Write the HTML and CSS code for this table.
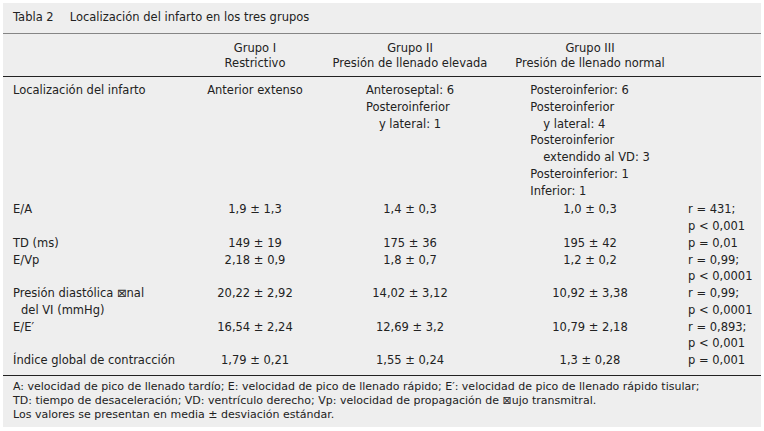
FILE: index.html
```html
<!DOCTYPE html>
<html lang="es">
<head>
    <meta charset="UTF-8">
    <title>Tabla 2</title>
    <link rel="stylesheet" href="styles.css">
</head>
<body>
    <div class="panel">
        <div class="caption">
            <span class="label">Tabla 2</span>
            <span>Localización del infarto en los tres grupos</span>
        </div>

        <table class="data">
            <colgroup>
                <col class="c1"><col class="c2"><col class="c3"><col class="c4"><col class="c5">
            </colgroup>
            <thead>
                <tr>
                    <th></th>
                    <th>Grupo I<br>Restrictivo</th>
                    <th>Grupo II<br>Presión de llenado elevada</th>
                    <th>Grupo III<br>Presión de llenado normal</th>
                    <th></th>
                </tr>
            </thead>
            <tbody>
                <tr class="first">
                    <td>Localización del infarto</td>
                    <td class="mid">Anterior extenso</td>
                    <td class="mid">
                        <div class="block">
                            <div>Anteroseptal: 6</div>
                            <div>Posteroinferior</div>
                            <div class="cont">y lateral: 1</div>
                        </div>
                    </td>
                    <td class="mid">
                        <div class="block">
                            <div>Posteroinferior: 6</div>
                            <div>Posteroinferior</div>
                            <div class="cont">y lateral: 4</div>
                            <div>Posteroinferior</div>
                            <div class="cont">extendido al VD: 3</div>
                            <div>Posteroinferior: 1</div>
                            <div>Inferior: 1</div>
                        </div>
                    </td>
                    <td></td>
                </tr>
                <tr>
                    <td>E/A</td>
                    <td class="mid">1,9 ± 1,3</td>
                    <td class="mid">1,4 ± 0,3</td>
                    <td class="mid">1,0 ± 0,3</td>
                    <td>r = 431;<br>p &lt; 0,001</td>
                </tr>
                <tr>
                    <td>TD (ms)</td>
                    <td class="mid">149 ± 19</td>
                    <td class="mid">175 ± 36</td>
                    <td class="mid">195 ± 42</td>
                    <td>p = 0,01</td>
                </tr>
                <tr>
                    <td>E/Vp</td>
                    <td class="mid">2,18 ± 0,9</td>
                    <td class="mid">1,8 ± 0,7</td>
                    <td class="mid">1,2 ± 0,2</td>
                    <td>r = 0,99;<br>p &lt; 0,0001</td>
                </tr>
                <tr>
                    <td>Presión diastólica ⊠nal<div class="cont short">del VI (mmHg)</div></td>
                    <td class="mid">20,22 ± 2,92</td>
                    <td class="mid">14,02 ± 3,12</td>
                    <td class="mid">10,92 ± 3,38</td>
                    <td>r = 0,99;<br>p &lt; 0,0001</td>
                </tr>
                <tr>
                    <td>E/E′</td>
                    <td class="mid">16,54 ± 2,24</td>
                    <td class="mid">12,69 ± 3,2</td>
                    <td class="mid">10,79 ± 2,18</td>
                    <td>r = 0,893;<br>p &lt; 0,001</td>
                </tr>
                <tr class="last">
                    <td>Índice global de contracción</td>
                    <td class="mid">1,79 ± 0,21</td>
                    <td class="mid">1,55 ± 0,24</td>
                    <td class="mid">1,3 ± 0,28</td>
                    <td>p = 0,001</td>
                </tr>
            </tbody>
        </table>

        <div class="notes">
            <p>A: velocidad de pico de llenado tardío; E: velocidad de pico de llenado rápido; E′: velocidad de pico de llenado rápido tisular;</p>
            <p>TD: tiempo de desaceleración; VD: ventrículo derecho; Vp: velocidad de propagación de ⊠ujo transmitral.</p>
            <p>Los valores se presentan en media ± desviación estándar.</p>
        </div>
    </div>
</body>
</html>
```

FILE: styles.css
```css
body {
    margin: 3px;
    background: #ffffff;
    font-family: 'DejaVu Sans', Verdana, sans-serif;
    font-size: 11.5px;
    color: #222;
}
.panel {
    width: 758px;
    height: 424px;
    background: #eeeeee;
    box-sizing: border-box;
}
.caption {
    padding: 6px 10px 8px;
    line-height: 16px;
    border-bottom: 1px solid #858585;
    display: flex;
    gap: 16px;
}
.data {
    width: 758px;
    table-layout: fixed;
    border-collapse: collapse;
    line-height: 16.75px;
}
.c1 { width: 192px; }
.c2 { width: 120px; }
.c3 { width: 190px; }
.c4 { width: 170px; }
.c5 { width: 86px; }
.data th {
    font-weight: normal;
    text-align: center;
    padding: 7px 0 5px;
    line-height: 15px;
    vertical-align: top;
}
.data thead tr {
    border-bottom: 1px solid #222;
}
.data td {
    padding: 0;
    vertical-align: top;
    text-align: left;
}
.data td:first-child {
    padding-left: 10px;
}
.data td:last-child {
    padding-left: 13px;
}
.data td.mid {
    text-align: center;
}
.data tr.first td {
    padding-top: 5px;
    padding-bottom: 2px;
}
.data tr.last td {
    padding-bottom: 6px;
}
.data tbody tr.last {
    border-bottom: 1px solid #222;
}
.block {
    display: inline-block;
    text-align: left;
}
.cont {
    padding-left: 13px;
}
.cont.short {
    padding-left: 8px;
}
.notes {
    padding: 4px 10px 0;
    font-size: 11px;
    line-height: 14px;
}
.notes p {
    margin: 0;
}
```
